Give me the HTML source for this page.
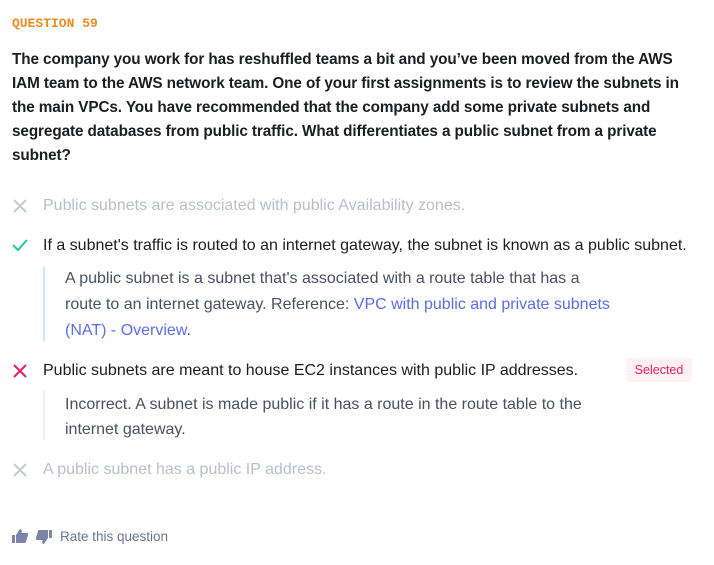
<!DOCTYPE html>
<html><head><meta charset="utf-8"><style>
body{margin:0;background:#fff;width:714px;height:565px;position:relative;font-family:"Liberation Sans",Arial,sans-serif;overflow:hidden}
.a{position:absolute;white-space:nowrap}
.q{left:12px;font-size:15.3px;font-weight:bold;color:#1c1d1f;letter-spacing:-0.1px}
.o{left:43px;font-size:16px;color:#1c1d1f}
.g{color:#b8bdd0}
.e{left:65px;font-size:16px;color:#4a4f63}
a{color:#5a6cf0;text-decoration:none}
</style></head><body>
<div class="a" style="left:12px;top:16px;font-family:'Liberation Mono',monospace;font-size:13px;font-weight:bold;color:#f2891f">QUESTION 59</div>
<div class="a q" style="top:51px">The company you work for has reshuffled teams a bit and you’ve been moved from the AWS</div>
<div class="a q" style="top:75px">IAM team to the AWS network team. One of your first assignments is to review the subnets in</div>
<div class="a q" style="top:99px">the main VPCs. You have recommended that the company add some private subnets and</div>
<div class="a q" style="top:123px">segregate databases from public traffic. What differentiates a public subnet from a private</div>
<div class="a q" style="top:147px">subnet?</div>

<svg class="a" style="left:12px;top:198px" width="16" height="16"><path d="M2 2L14 14M14 2L2 14" stroke="#c4c9d8" stroke-width="2"/></svg>
<div class="a o g" style="top:197px">Public subnets are associated with public Availability zones.</div>

<svg class="a" style="left:11px;top:238px" width="18" height="14"><path d="M2 7L7 12L16 2" stroke="#1dc9a0" stroke-width="2" fill="none"/></svg>
<div class="a o" style="top:237px">If a subnet's traffic is routed to an internet gateway, the subnet is known as a public subnet.</div>
<div class="a" style="left:43px;top:266px;width:2px;height:76px;background:#c4f5e4"></div>
<div class="a e" style="top:270px">A public subnet is a subnet that's associated with a route table that has a</div>
<div class="a e" style="top:296px">route to an internet gateway. Reference: <a>VPC with public and private subnets</a></div>
<div class="a e" style="top:322px"><a>(NAT) - Overview</a>.</div>

<svg class="a" style="left:12px;top:363px" width="16" height="16"><path d="M2 2L14 14M14 2L2 14" stroke="#ef1e63" stroke-width="2"/></svg>
<div class="a o" style="top:362px">Public subnets are meant to house EC2 instances with public IP addresses.</div>
<div class="a" style="left:626px;top:358px;width:66px;height:24px;background:#fff0f3;border-radius:3px;color:#ef1e63;font-size:12.5px;text-align:center;line-height:24px">Selected</div>
<div class="a" style="left:43px;top:390px;width:2px;height:50px;background:#fde6ec"></div>
<div class="a e" style="top:396px">Incorrect. A subnet is made public if it has a route in the route table to the</div>
<div class="a e" style="top:421px">internet gateway.</div>

<svg class="a" style="left:12px;top:462px" width="16" height="16"><path d="M2 2L14 14M14 2L2 14" stroke="#c4c9d8" stroke-width="2"/></svg>
<div class="a o g" style="top:461px">A public subnet has a public IP address.</div>

<svg class="a" style="left:11px;top:528px" width="18" height="16"><path d="M1 7h3v8H1zM5 7l4-6c2 0 2 2 1.5 4H16c1 0 1.5 1 1 2l-2 7c-.3.8-1 1-2 1H5z" fill="#7a86a8"/></svg>
<svg class="a" style="left:35px;top:529px" width="18" height="16"><path d="M14 1h3v8h-3zM13 9l-4 6c-2 0-2-2-1.5-4H2c-1 0-1.5-1-1-2l2-7c.3-.8 1-1 2-1h8z" fill="#7a86a8"/></svg>
<div class="a" style="left:60px;top:529px;font-size:13.5px;color:#6c7390">Rate this question</div>
</body></html>
